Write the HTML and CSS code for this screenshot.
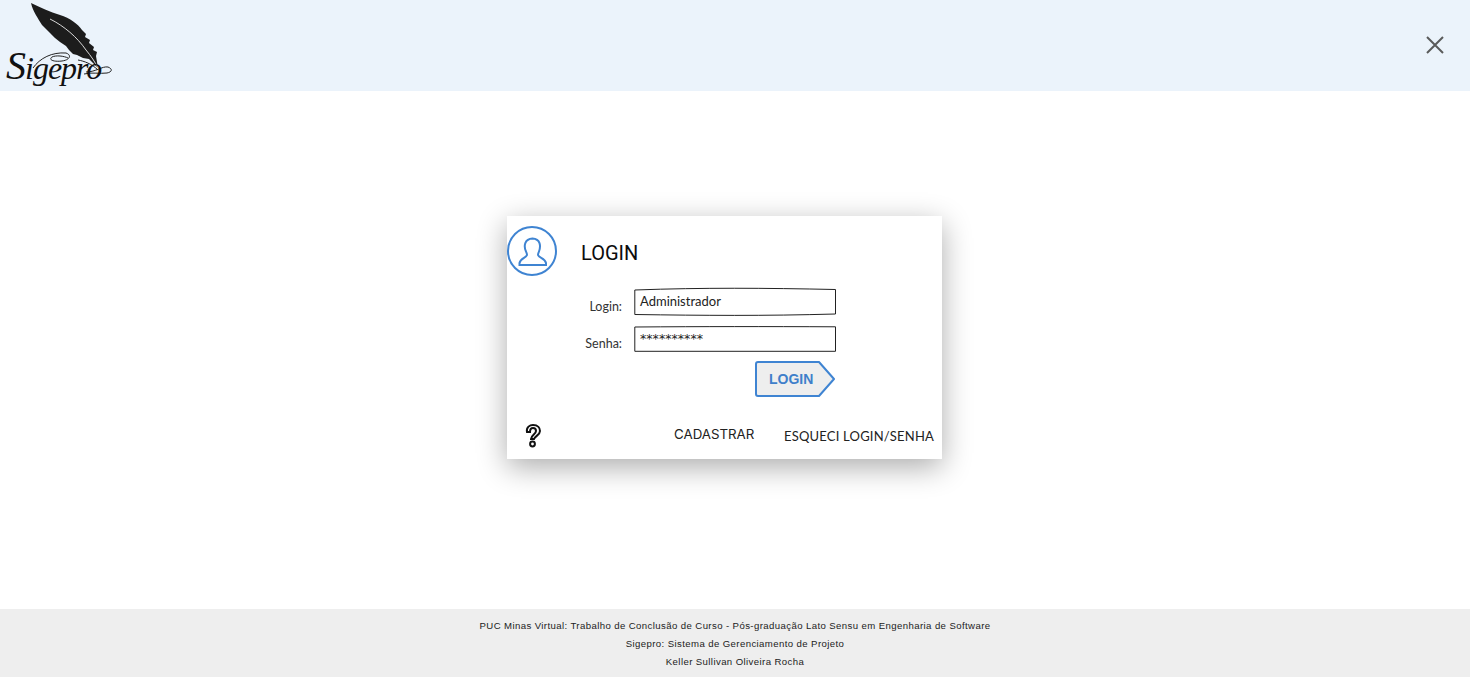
FILE: index.html
```html
<!DOCTYPE html>
<html lang="pt-BR">
<head>
<meta charset="utf-8">
<title>Sigepro - Login</title>
<link rel="stylesheet" href="styles.css">
</head>
<body>
<header class="topbar">
  <div class="logo">
    <svg class="logo-art" width="114" height="91" viewBox="0 0 114 91">
      <path class="feather" d="M31 3 C40 7 50 12 60 15 C70 18 78 24 82 30 L86 34 L85 37 L90 40 L89 43 L94 47 L93 50 L97 52 L96 56 L98 68 L93 63 L89 59 L83 58 L77 55 L73 54 L69 50 L66 46 L60 42 L55 38 L50 33 L42 25 C38 18 33 12 31 3 Z"/>
      <path class="quill" d="M50 19 C64 26 77 37 86 50 C91 56 95 62 98 68"/>
      <path class="swirl" d="M33 68 C40 58 52 52 66 53 C72 55 70 60 62 61 C54 62 48 60 52 57 C56 55 64 56 68 58 M78 60 C84 61 92 64 98 70 M86 72 C96 72 102 66 108 67 C113 69 112 72 107 73 C100 74 92 72 84 74"/>
    </svg>
    <span class="logo-text"><span class="logo-cap">S</span>igepro</span>
  </div>
  <svg class="close" width="20" height="20" viewBox="0 0 20 20"><path d="M2 2 L18 18 M18 2 L2 18"/></svg>
</header>

<main class="stage">
  <section class="card">
    <div class="card-head">
      <svg class="avatar" width="50" height="50" viewBox="0 0 50 50">
        <circle cx="25" cy="25" r="24"/>
        <path d="M20 29 C20 27.5 19.5 27 19 25.5 C16.5 20 17.5 13 25.5 12.5 C33.5 13 34 20 32 25.5 C31.5 27 31 27.5 31 29 C32 32 38 32 39 37 L39 39 L12.5 39 L12.5 37 C13.5 32 19 32 20 29 Z"/>
      </svg>
      <h1 class="title">LOGIN</h1>
    </div>
    <form class="form">
      <div class="row row-login">
        <label class="label">Login:</label>
        <div class="field">
          <svg class="field-edge" width="202" height="28" viewBox="0 0 202 28"><path d="M0.8 2 C70 -0.5 130 0 201.5 1.5 L201.5 26 C130 28 70 27.5 0.8 26.5 Z"/></svg>
          <span class="field-text">Administrador</span>
        </div>
      </div>
      <div class="row row-pass">
        <label class="label">Senha:</label>
        <div class="field field-pass">
          <svg class="field-edge" width="202" height="26" viewBox="0 0 202 26"><path d="M0.8 1 C70 0.5 130 0.5 201.5 0.8 L201.5 25.3 L0.8 25.3 Z"/></svg>
          <span class="field-text">**********</span>
        </div>
      </div>
      <div class="row-action">
        <button class="submit" type="button">
          <svg class="submit-shape" width="80" height="36" viewBox="0 0 80 36"><path d="M3 1 L64 1 L79 18 L64 35 L3 35 Q1 35 1 33 L1 3 Q1 1 3 1 Z"/></svg>
          <span class="submit-text">LOGIN</span>
        </button>
      </div>
    </form>
    <div class="card-foot">
      <svg class="help" width="16" height="24" viewBox="0 0 16 24">
        <path d="M2 8 C1 3 5 1 8 1 C13 1 15 4 15 7 C15 11 10 12 9 15 L6 15 C6 11 11 10 11 7 C11 5 10 4 8 4 C6 4 5 6 5 8 Z"/>
        <circle cx="7.5" cy="20" r="2.4"/>
      </svg>
      <a class="link-signup">CADASTRAR</a>
      <a class="link-forgot">ESQUECI LOGIN/SENHA</a>
    </div>
  </section>
</main>

<footer class="footer">
  <p>PUC Minas Virtual: Trabalho de Conclusão de Curso - Pós-graduação Lato Sensu em Engenharia de Software</p>
  <p>Sigepro: Sistema de Gerenciamento de Projeto</p>
  <p>Keller Sullivan Oliveira Rocha</p>
</footer>
</body>
</html>
```
FILE: styles.css
```css
* { box-sizing: border-box; }
html, body { margin: 0; height: 100%; }
body {
  display: flex;
  flex-direction: column;
  height: 677px;
  overflow: hidden;
  background: #fff;
  font-family: "Liberation Sans", Arial, sans-serif;
  color: #000;
}
.topbar {
  flex: 0 0 91px;
  display: flex;
  justify-content: space-between;
  align-items: center;
  padding-right: 25px;
  background: #ebf3fb;
}
.logo { position: relative; width: 114px; height: 91px; }
.logo-art { display: block; }
.feather { fill: #1c1c1c; }
.quill { fill: none; stroke: #d9d9d9; stroke-width: 1; }
.swirl { fill: none; stroke: #222; stroke-width: 1; }
.logo-text {
  position: absolute;
  left: 6px;
  top: 46px;
  font-family: "Liberation Serif", serif;
  font-style: italic;
  font-size: 32px;
  line-height: 40px;
  letter-spacing: -1px;
  color: #111;
}
.logo-cap { font-size: 40px; }
.close { display: block; margin-bottom: 2px; }
.close path { fill: none; stroke: #5a5a5a; stroke-width: 2; }

.stage { flex: 1; display: flex; justify-content: center; align-items: flex-start; padding: 125px 21px 0 0; }
.card {
  width: 435px;
  height: 243px;
  background: #fff;
  box-shadow: 0 8px 28px rgba(0, 0, 0, 0.33);
  display: flex;
  flex-direction: column;
  padding-top: 10px;
}
.card-head { display: flex; align-items: center; gap: 24px; height: 50px; }
.avatar { display: block; flex: none; }
.avatar circle, .avatar path { fill: none; stroke: #3f84d2; stroke-width: 2; }
.title { margin: 0; padding-top: 4px; font-family: Roboto, sans-serif; font-weight: 400; font-size: 20px; line-height: 24px; color: #0c0c0c; }

.form { display: flex; flex-direction: column; padding-top: 12px; }
.row { display: flex; gap: 12px; }
.row-login { height: 28px; }
.row-pass { height: 26px; margin-top: 10px; }
.label {
  width: 115px;
  text-align: right;
  font-family: Lato, sans-serif;
  font-size: 12.5px;
  line-height: 16px;
  color: #333;
}
.row-login .label { padding-top: 11px; }
.row-pass .label { padding-top: 10px; }
.field { position: relative; width: 202px; height: 100%; }
.field-edge { position: absolute; left: 0; top: 0; overflow: visible; }
.field-edge path { fill: #fff; stroke: #222; stroke-width: 1; }
.field-text {
  position: absolute;
  left: 6px;
  top: 5px;
  font-family: Lato, sans-serif;
  font-size: 13px;
  line-height: 16px;
  color: #222;
}
.field-pass .field-text { top: 5px; font-family: "DejaVu Sans", sans-serif; font-size: 12.6px; }
.row-action { display: flex; justify-content: flex-end; padding: 9px 107px 0 0; }
.submit { position: relative; width: 80px; height: 36px; padding: 0; border: 0; background: none; font: inherit; }
.submit-shape { position: absolute; left: 0; top: 0; }
.submit-shape path { fill: #eeeeee; stroke: #3f84d2; stroke-width: 2; stroke-linejoin: round; }
.submit-text {
  position: absolute;
  left: 14px;
  top: 9px;
  font-weight: 700;
  font-size: 14px;
  line-height: 18px;
  color: #3f7fca;
}

.card-foot { position: relative; flex: 1; }
.help { position: absolute; left: 18px; top: 27px; }
.help path, .help circle { fill: #fff; stroke: #111; stroke-width: 2; }
.link-signup {
  position: absolute;
  left: 167px;
  top: 28px;
  font-family: Inter, sans-serif;
  font-size: 13.3px;
  line-height: 18px;
  color: #222;
}
.link-forgot {
  position: absolute;
  left: 277px;
  top: 30px;
  font-family: Lato, sans-serif;
  font-size: 13px;
  line-height: 18px;
  letter-spacing: 0.2px;
  white-space: nowrap;
  color: #222;
}

.footer {
  flex: 0 0 68px;
  background: #eeeeee;
  text-align: center;
  padding-top: 8px;
  font-size: 9.6px;
  line-height: 18px;
  letter-spacing: 0.4px;
  color: #222;
}
.footer p { margin: 0; }
```
